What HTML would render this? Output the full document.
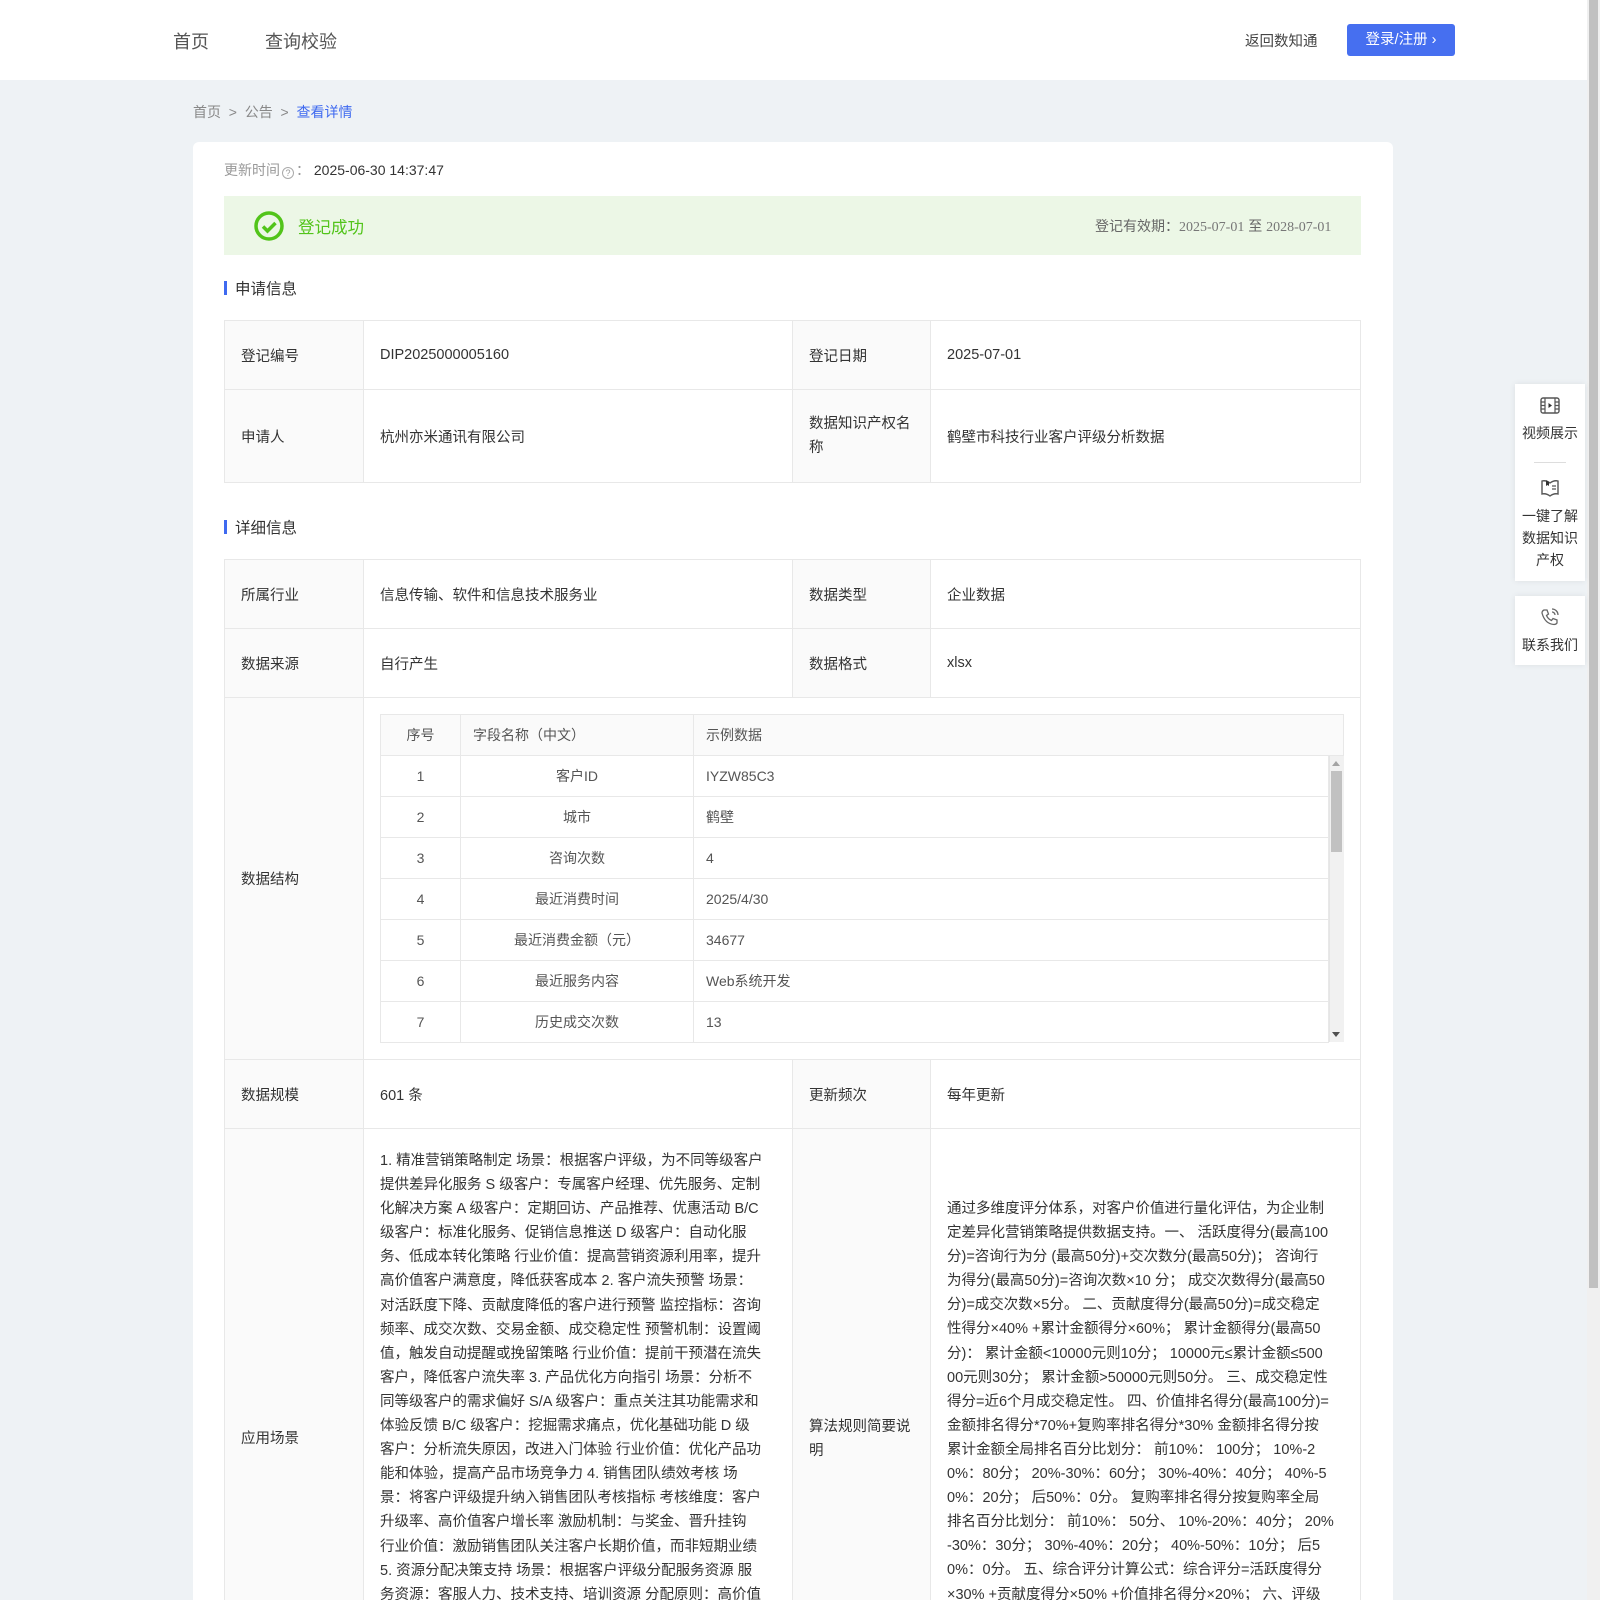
<!DOCTYPE html>
<html style="width:1600px;height:1600px;overflow:hidden"><head><meta charset="utf-8">
<style>
*{margin:0;padding:0;box-sizing:border-box}
body{width:1600px;height:1600px;overflow:hidden;background:#eef2f5;font-family:"Liberation Sans","Noto Sans CJK SC",sans-serif;color:#333;position:relative;font-size:14px}
.a{position:absolute;white-space:nowrap}
.hdr{position:absolute;left:0;top:0;width:1587px;height:80px;background:#fff}
.sb{position:absolute;left:1587px;top:0;width:13px;height:1600px;background:#f0f0f0}
.sb div{position:absolute;left:2px;top:0;width:9px;height:1288px;background:#c1c1c1}
.card{position:absolute;left:193px;top:142px;width:1200px;height:1458px;background:#fff;border-radius:6px 6px 0 0}
.cell{position:absolute;border:1px solid #e8e8e8;display:flex;align-items:center;padding-left:16px;font-size:14.5px;color:#333}
.lb{background:#fafafa}
.sec{position:absolute;font-size:15.5px;color:#333;padding-left:11px}
.sec:before{content:"";position:absolute;left:0;top:4px;width:3px;height:14px;background:#3f6af0}
.it{position:absolute;border:1px solid #e8e8e8;display:flex;align-items:center;font-size:14px;color:#555}
.long{position:absolute;font-size:14.5px;line-height:24.1px;color:#333;white-space:nowrap}
.side{position:absolute;left:1515px;width:70px;background:#fff;box-shadow:0 0 6px rgba(0,0,0,.08);text-align:center;font-size:14px;color:#333;line-height:22px}
</style></head><body>
<div class="hdr"></div>
<div class="a" style="left:173px;top:28px;font-size:18px;color:#555">首页</div>
<div class="a" style="left:265px;top:28px;font-size:18px;color:#555">查询校验</div>
<div class="a" style="left:1245px;top:30px;font-size:14.5px;color:#444">返回数知通</div>
<div class="a" style="left:1347px;top:24px;width:108px;height:32px;background:#466ff0;border-radius:3px;color:#fff;font-size:14.5px;line-height:32px;text-align:center">登录/注册 ›</div>
<div class="sb"><div></div></div>
<div class="a" style="left:193px;top:102px;font-size:14px;color:#888">首页 &nbsp;&gt;&nbsp; 公告 &nbsp;&gt;&nbsp; <span style="color:#3f6af0">查看详情</span></div>
<div class="card"></div>
<div class="a" style="left:224px;top:160px;font-size:14px;color:#999">更新时间<span style="display:inline-block;width:12px;height:12px;border:1px solid #aaa;border-radius:50%;font-size:9px;line-height:10px;text-align:center;margin:0 2px;vertical-align:-1px">?</span>： <span style="color:#333">2025-06-30 14:37:47</span></div>
<div class="a" style="left:224px;top:196px;width:1137px;height:59px;background:#ecf7e6"></div>
<svg class="a" style="left:253px;top:210px" width="32" height="32" viewBox="0 0 32 32"><circle cx="16" cy="16" r="13" fill="none" stroke="#52c41a" stroke-width="3.5"/><path d="M10 16.5l4.5 4.5 8-8" fill="none" stroke="#52c41a" stroke-width="3.5"/></svg>
<div class="a" style="left:298px;top:214px;font-size:16.5px;color:#52c41a">登记成功</div>
<div class="a" style="left:1095px;top:216px;font-size:14px;color:#666">登记有效期：<span style="font-family:'Liberation Serif',serif;color:#777">2025-07-01</span> 至 <span style="font-family:'Liberation Serif',serif;color:#777">2028-07-01</span></div>

<div class="sec" style="left:224px;top:277px">申请信息</div>
<div class="cell lb" style="left:224px;top:320px;width:140px;height:70px">登记编号</div>
<div class="cell" style="left:363px;top:320px;width:430px;height:70px">DIP2025000005160</div>
<div class="cell lb" style="left:792px;top:320px;width:139px;height:70px">登记日期</div>
<div class="cell" style="left:930px;top:320px;width:431px;height:70px">2025-07-01</div>
<div class="cell lb" style="left:224px;top:389px;width:140px;height:94px">申请人</div>
<div class="cell" style="left:363px;top:389px;width:430px;height:94px">杭州亦米通讯有限公司</div>
<div class="cell lb" style="left:792px;top:389px;width:139px;height:94px;line-height:24px;white-space:normal;padding-right:12px">数据知识产权名称</div>
<div class="cell" style="left:930px;top:389px;width:431px;height:94px">鹤壁市科技行业客户评级分析数据</div>

<div class="sec" style="left:224px;top:516px">详细信息</div>
<div class="cell lb" style="left:224px;top:559px;width:140px;height:70px">所属行业</div>
<div class="cell" style="left:363px;top:559px;width:430px;height:70px">信息传输、软件和信息技术服务业</div>
<div class="cell lb" style="left:792px;top:559px;width:139px;height:70px">数据类型</div>
<div class="cell" style="left:930px;top:559px;width:431px;height:70px">企业数据</div>
<div class="cell lb" style="left:224px;top:628px;width:140px;height:70px">数据来源</div>
<div class="cell" style="left:363px;top:628px;width:430px;height:70px">自行产生</div>
<div class="cell lb" style="left:792px;top:628px;width:139px;height:70px">数据格式</div>
<div class="cell" style="left:930px;top:628px;width:431px;height:70px">xlsx</div>
<div class="cell lb" style="left:224px;top:697px;width:140px;height:363px">数据结构</div>
<div class="cell" style="left:363px;top:697px;width:998px;height:363px"></div>

<div class="it" style="left:380px;top:714px;width:81px;height:42px;background:#fafafa;justify-content:center">序号</div>
<div class="it" style="left:460px;top:714px;width:234px;height:42px;background:#fafafa;padding-left:12px">字段名称（中文）</div>
<div class="it" style="left:693px;top:714px;width:651px;height:42px;background:#fafafa;padding-left:12px">示例数据</div>

<div class="it" style="left:380px;top:755px;width:81px;height:42px;justify-content:center">1</div><div class="it" style="left:460px;top:755px;width:234px;height:42px;justify-content:center">客户ID</div><div class="it" style="left:693px;top:755px;width:636px;height:42px;padding-left:12px">IYZW85C3</div>
<div class="it" style="left:380px;top:796px;width:81px;height:42px;justify-content:center">2</div><div class="it" style="left:460px;top:796px;width:234px;height:42px;justify-content:center">城市</div><div class="it" style="left:693px;top:796px;width:636px;height:42px;padding-left:12px">鹤壁</div>
<div class="it" style="left:380px;top:837px;width:81px;height:42px;justify-content:center">3</div><div class="it" style="left:460px;top:837px;width:234px;height:42px;justify-content:center">咨询次数</div><div class="it" style="left:693px;top:837px;width:636px;height:42px;padding-left:12px">4</div>
<div class="it" style="left:380px;top:878px;width:81px;height:42px;justify-content:center">4</div><div class="it" style="left:460px;top:878px;width:234px;height:42px;justify-content:center">最近消费时间</div><div class="it" style="left:693px;top:878px;width:636px;height:42px;padding-left:12px">2025/4/30</div>
<div class="it" style="left:380px;top:919px;width:81px;height:42px;justify-content:center">5</div><div class="it" style="left:460px;top:919px;width:234px;height:42px;justify-content:center">最近消费金额（元）</div><div class="it" style="left:693px;top:919px;width:636px;height:42px;padding-left:12px">34677</div>
<div class="it" style="left:380px;top:960px;width:81px;height:42px;justify-content:center">6</div><div class="it" style="left:460px;top:960px;width:234px;height:42px;justify-content:center">最近服务内容</div><div class="it" style="left:693px;top:960px;width:636px;height:42px;padding-left:12px">Web系统开发</div>
<div class="it" style="left:380px;top:1001px;width:81px;height:42px;justify-content:center">7</div><div class="it" style="left:460px;top:1001px;width:234px;height:42px;justify-content:center">历史成交次数</div><div class="it" style="left:693px;top:1001px;width:636px;height:42px;padding-left:12px">13</div>
<div class="a" style="left:1329px;top:756px;width:15px;height:286px;background:#f1f1f1;border-left:1px solid #e5e5e5"></div>
<div class="a" style="left:1331px;top:771px;width:11px;height:81px;background:#c1c1c1"></div>
<div class="a" style="left:1332px;top:761px;width:0;height:0;border:4px solid transparent;border-bottom:5px solid #a3a3a3;border-top:0"></div>
<div class="a" style="left:1332px;top:1032px;width:0;height:0;border:4px solid transparent;border-top:5px solid #505050;border-bottom:0"></div>

<div class="cell lb" style="left:224px;top:1059px;width:140px;height:70px">数据规模</div>
<div class="cell" style="left:363px;top:1059px;width:430px;height:70px">601 条</div>
<div class="cell lb" style="left:792px;top:1059px;width:139px;height:70px">更新频次</div>
<div class="cell" style="left:930px;top:1059px;width:431px;height:70px">每年更新</div>
<div class="cell lb" style="left:224px;top:1128px;width:140px;height:472px;border-bottom:0;align-items:flex-start;padding-top:298px">应用场景</div>
<div class="cell" style="left:363px;top:1128px;width:430px;height:472px;border-bottom:0"></div>
<div class="cell lb" style="left:792px;top:1128px;width:139px;height:472px;border-bottom:0;align-items:flex-start;padding-top:286px;line-height:24px;white-space:normal;padding-right:12px">算法规则简要说明</div>
<div class="cell" style="left:930px;top:1128px;width:431px;height:472px;border-bottom:0"></div>

<div class="long" style="left:380px;top:1149px">1. 精准营销策略制定 场景：根据客户评级，为不同等级客户<br>提供差异化服务 S 级客户：专属客户经理、优先服务、定制<br>化解决方案 A 级客户：定期回访、产品推荐、优惠活动 B/C<br>级客户：标准化服务、促销信息推送 D 级客户：自动化服<br>务、低成本转化策略 行业价值：提高营销资源利用率，提升<br>高价值客户满意度，降低获客成本 2. 客户流失预警 场景：<br>对活跃度下降、贡献度降低的客户进行预警 监控指标：咨询<br>频率、成交次数、交易金额、成交稳定性 预警机制：设置阈<br>值，触发自动提醒或挽留策略 行业价值：提前干预潜在流失<br>客户，降低客户流失率 3. 产品优化方向指引 场景：分析不<br>同等级客户的需求偏好 S/A 级客户：重点关注其功能需求和<br>体验反馈 B/C 级客户：挖掘需求痛点，优化基础功能 D 级<br>客户：分析流失原因，改进入门体验 行业价值：优化产品功<br>能和体验，提高产品市场竞争力 4. 销售团队绩效考核 场<br>景：将客户评级提升纳入销售团队考核指标 考核维度：客户<br>升级率、高价值客户增长率 激励机制：与奖金、晋升挂钩<br>行业价值：激励销售团队关注客户长期价值，而非短期业绩<br>5. 资源分配决策支持 场景：根据客户评级分配服务资源 服<br>务资源：客服人力、技术支持、培训资源 分配原则：高价值</div>
<div class="long" style="left:947px;top:1197px">通过多维度评分体系，对客户价值进行量化评估，为企业制<br>定差异化营销策略提供数据支持。一、 活跃度得分(最高100<br>分)=咨询行为分 (最高50分)+交次数分(最高50分)； 咨询行<br>为得分(最高50分)=咨询次数×10 分； 成交次数得分(最高50<br>分)=成交次数×5分。 二、贡献度得分(最高50分)=成交稳定<br>性得分×40% +累计金额得分×60%； 累计金额得分(最高50<br>分)： 累计金额&lt;10000元则10分； 10000元≤累计金额≤500<br>00元则30分； 累计金额&gt;50000元则50分。 三、成交稳定性<br>得分=近6个月成交稳定性。 四、价值排名得分(最高100分)=<br>金额排名得分*70%+复购率排名得分*30% 金额排名得分按<br>累计金额全局排名百分比划分： 前10%： 100分； 10%-2<br>0%：80分； 20%-30%：60分； 30%-40%：40分； 40%-5<br>0%：20分； 后50%：0分。 复购率排名得分按复购率全局<br>排名百分比划分： 前10%： 50分、 10%-20%：40分； 20%<br>-30%：30分； 30%-40%：20分； 40%-50%：10分； 后5<br>0%：0分。 五、综合评分计算公式：综合评分=活跃度得分<br>×30% +贡献度得分×50% +价值排名得分×20%； 六、评级</div>

<div class="side" style="top:384px;height:197px;padding-top:12px">
<svg width="22" height="20" viewBox="0 0 22 20"><rect x="2" y="2" width="18" height="15" rx="2" fill="none" stroke="#555" stroke-width="1.4"/><path d="M6 2v15M16 2v15M2 6h4M2 9.5h4M2 13h4M16 6h4M16 9.5h4M16 13h4" stroke="#555" stroke-width="1.2"/><path d="M9.5 7v5l3.5-2.5z" fill="#333"/></svg>
<div>视频展示</div>
<div style="width:32px;height:1px;background:#ddd;margin:18px auto 14px"></div>
<svg width="22" height="22" viewBox="0 0 22 22"><path d="M3 4q4-1 8 2q4-3 8-2v13q-4-1-8 2q-4-3-8-2z" fill="none" stroke="#555" stroke-width="1.4"/><path d="M7 3v6l1.5-1 1.5 1V5" fill="#333"/><path d="M13 9h4M13 12h4" stroke="#555" stroke-width="1.2"/></svg>
<div>一键了解<br>数据知识<br>产权</div>
</div>
<div class="side" style="top:596px;height:69px;padding-top:10px">
<svg width="22" height="22" viewBox="0 0 22 22"><path d="M5 4l3 0 1.5 4-2 1.5q1.5 3.5 5 5l1.5-2 4 1.5v3q-1 1.5-3 1.5Q6 18 3 7q0-2 2-3z" fill="none" stroke="#666" stroke-width="1.3"/><path d="M13 3a6 6 0 0 1 6 6M13 6a3 3 0 0 1 3 3" fill="none" stroke="#666" stroke-width="1.3"/></svg>
<div>联系我们</div>
</div>
</body></html>
